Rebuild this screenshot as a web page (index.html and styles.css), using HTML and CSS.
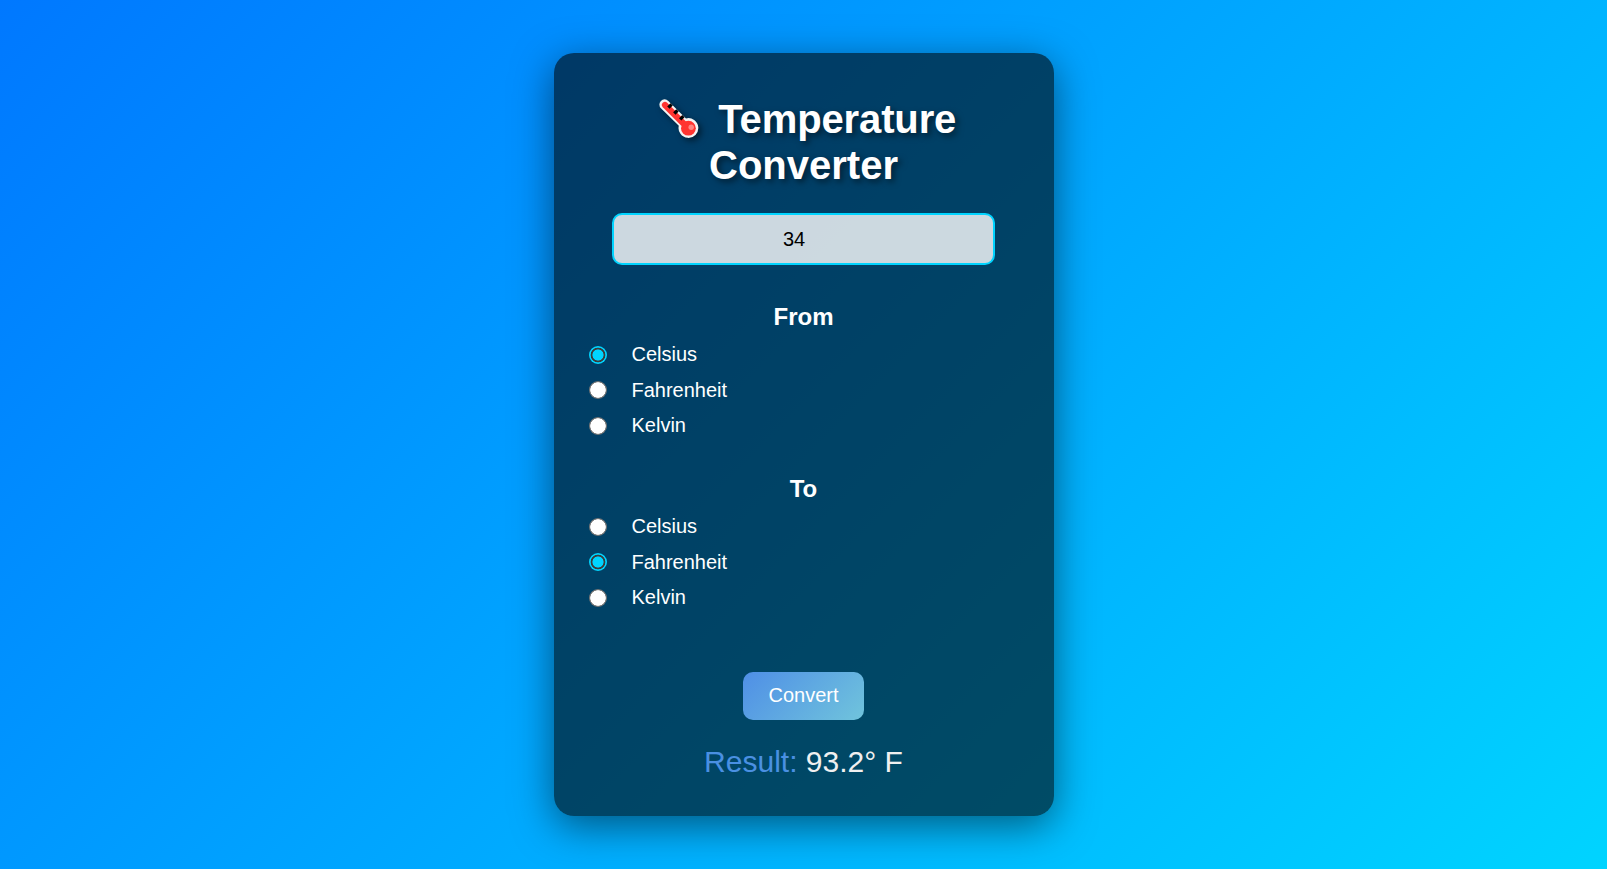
FILE: index.html
```html
<!DOCTYPE html>
<html lang="en">
<head>
<meta charset="utf-8">
<title>Temperature Converter</title>
<link rel="stylesheet" href="styles.css">
</head>
<body>
<main class="card">
  <h1 class="title"><svg class="thermometer" viewBox="0 0 40 40" aria-hidden="true">
      <path d="M9.3 1.9 L27 19.4 A9.9 9.9 0 1 1 19.8 26.7 L1.9 9.3 A5.2 5.2 0 0 1 9.3 1.9Z" fill="#f4f4f4"/>
      <path d="M6 6 L24 24" stroke="#ff3430" stroke-width="6.2" stroke-linecap="round"/>
      <circle cx="29.4" cy="29.2" r="7.4" fill="#ff3430"/>
      <circle cx="32.2" cy="28.2" r="2.7" fill="#ff8581"/>
      <path d="M12.6 5.4 L9.4 8.6 M18.5 11.3 L15.3 14.5 M24.4 17.2 L21.2 20.4" stroke="#000" stroke-width="3.3"/>
    </svg><span class="first-word">Temperature</span><br>Converter</h1>
  <input class="value" type="number" value="34" aria-label="Temperature">
  <section class="group">
    <h2 class="heading">From</h2>
    <label class="option"><input class="radio" type="radio" name="from" checked>Celsius</label>
    <label class="option"><input class="radio" type="radio" name="from">Fahrenheit</label>
    <label class="option"><input class="radio" type="radio" name="from">Kelvin</label>
  </section>
  <section class="group">
    <h2 class="heading">To</h2>
    <label class="option"><input class="radio" type="radio" name="to">Celsius</label>
    <label class="option"><input class="radio" type="radio" name="to" checked>Fahrenheit</label>
    <label class="option"><input class="radio" type="radio" name="to">Kelvin</label>
  </section>
  <button class="convert" type="button">Convert</button>
  <p class="result">Result: <span class="answer">93.2° F</span></p>
</main>
</body>
</html>
```
FILE: styles.css
```css
* { box-sizing: border-box; }

body {
  margin: 0;
  height: 100vh;
  display: flex;
  justify-content: center;
  align-items: center;
  overflow: hidden;
  background: linear-gradient(135deg, #0078ff, #00d4ff);
  font-family: Arial, "Liberation Sans", sans-serif;
  color: #fff;
}

.card {
  width: 500px;
  height: 763px;
  padding: 43px 35px 0;
  display: flex;
  flex-direction: column;
  align-items: center;
  border-radius: 20px;
  background: rgba(0, 0, 0, 0.6);
  box-shadow: 0 10px 40px rgba(0, 0, 0, 0.5);
}

.title {
  margin: 0 0 25px;
  font-size: 40px;
  line-height: 46px;
  text-align: center;
  text-shadow: 3px 3px 6px rgba(0, 0, 0, 0.5);
}

.thermometer {
  width: 40px;
  height: 40px;
  margin: 0 19.5px 0 8px;
  vertical-align: -6px;
  fill: none;
  filter: drop-shadow(3px 3px 3px rgba(0, 0, 0, 0.5));
}

.first-word { letter-spacing: -0.12px; }

.value {
  width: 383px;
  height: 52px;
  margin: 0 0 38px;
  padding: 0 4px 0 0;
  border: 2px solid #00d4ff;
  border-radius: 10px;
  outline: none;
  background: rgba(255, 255, 255, 0.8);
  color: #000;
  font: 20px Arial, "Liberation Sans", sans-serif;
  text-align: center;
}

.group {
  width: 100%;
  height: 172px;
}

.heading {
  margin: 0 0 7px;
  font-size: 24px;
  line-height: 27px;
  text-align: center;
}

.option {
  height: 35.5px;
  display: flex;
  align-items: center;
  font-size: 20px;
  line-height: 23px;
}

.radio {
  appearance: none;
  width: 18px;
  height: 18px;
  margin: 0 24.5px 0 0.5px;
  border-radius: 50%;
  background: radial-gradient(circle closest-side, #fff 7.4px, #767676 8px);
}

.radio:checked {
  background: radial-gradient(circle closest-side, #00d4ff 5.2px, #3b3b3b 5.9px, #3b3b3b 7px, #00d4ff 7.7px);
}

.convert {
  width: 121px;
  height: 48px;
  margin-top: 25px;
  padding: 0 0 2px;
  border: 0;
  border-radius: 10px;
  background: linear-gradient(135deg, #4f8fe6, #70c4dc);
  color: #fff;
  font: 20px Arial, "Liberation Sans", sans-serif;
}

.result {
  margin: 25px 0 0;
  font-size: 30px;
  line-height: 34px;
  color: #4a90e2;
}

.answer { color: #f0f0f0; }
```
